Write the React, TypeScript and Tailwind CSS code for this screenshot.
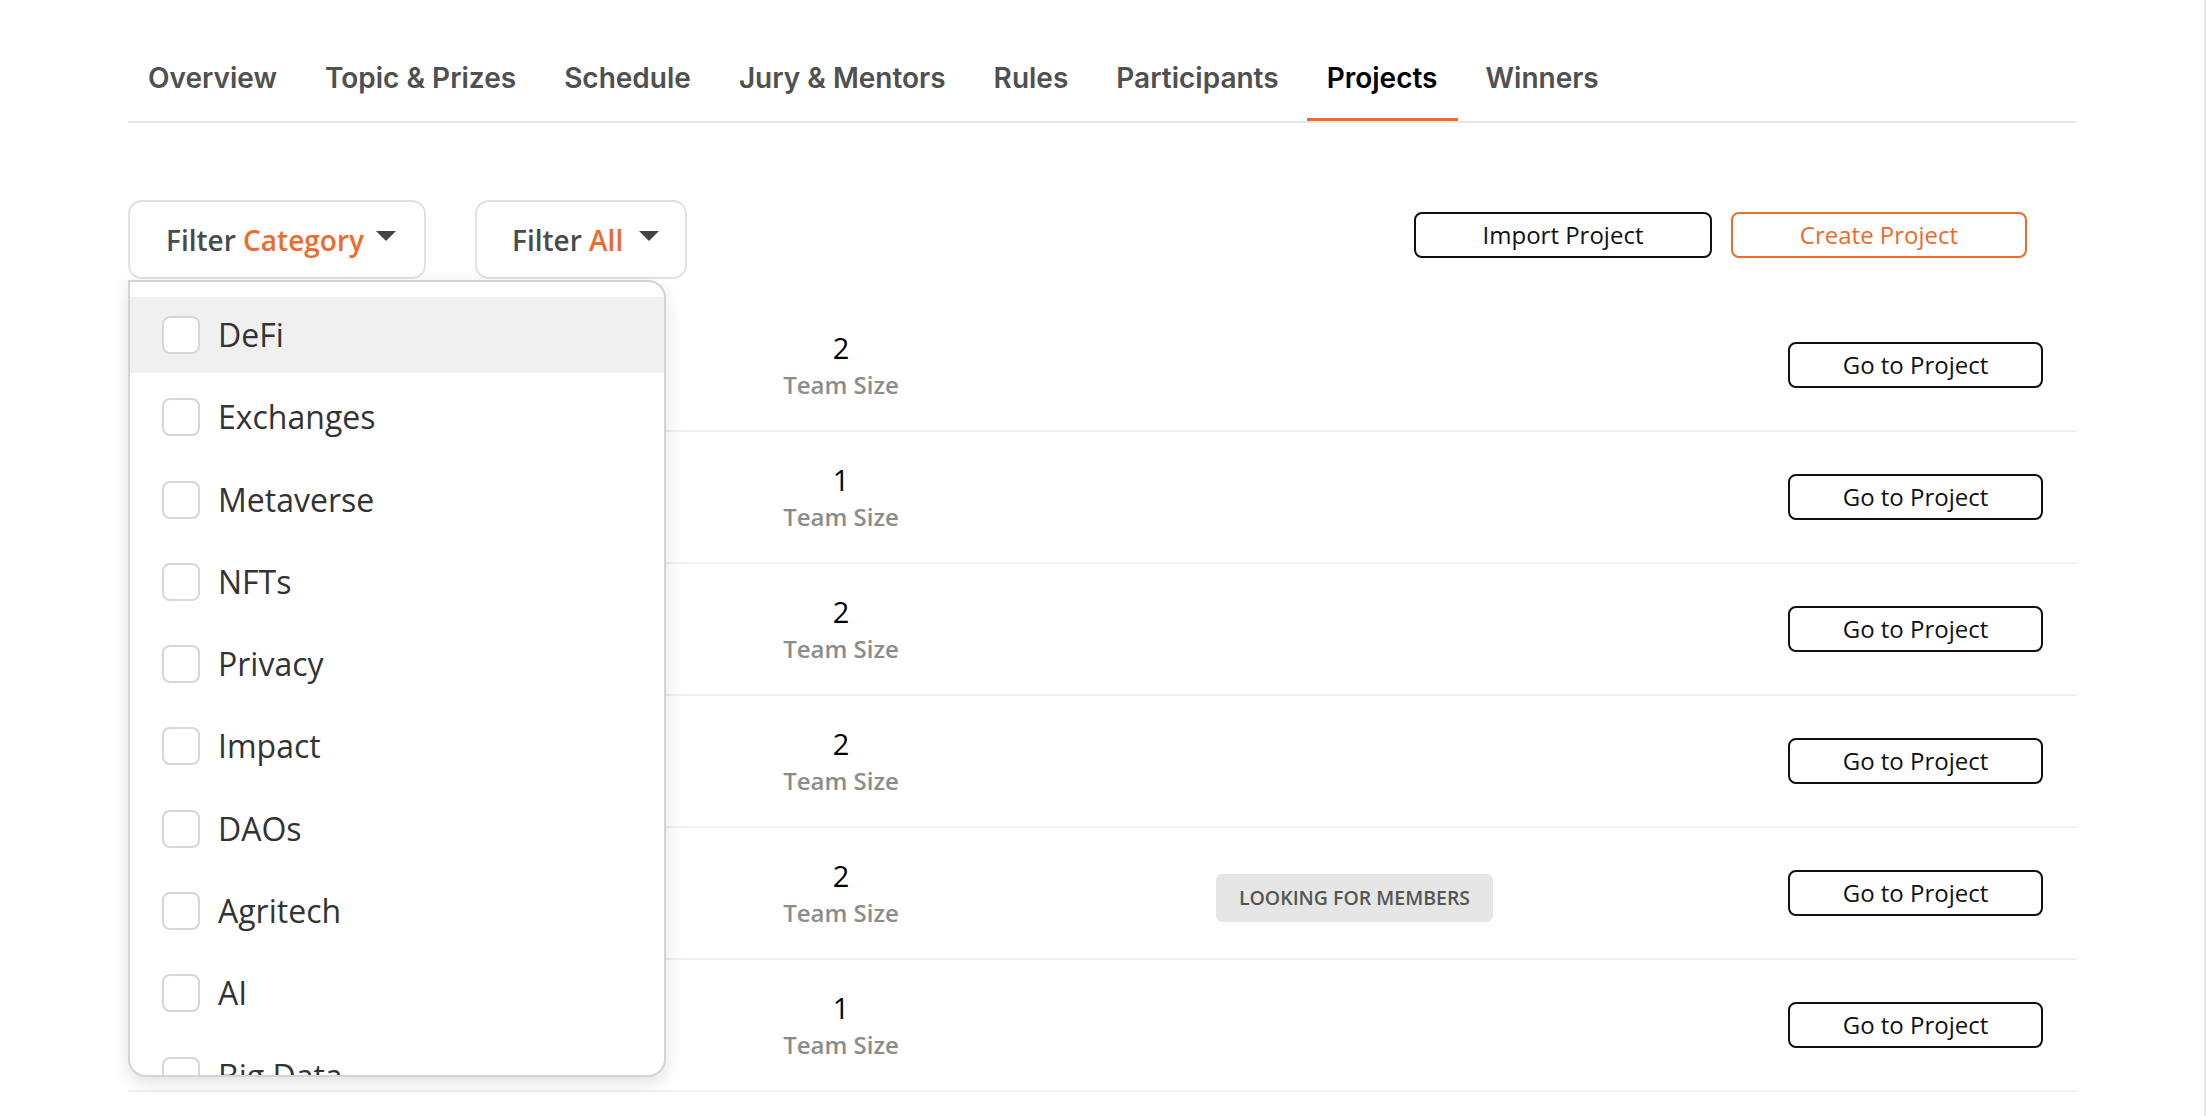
const tabs = ['Overview', 'Topic & Prizes', 'Schedule', 'Jury & Mentors', 'Rules', 'Participants', 'Projects', 'Winners']

const categories = ['DeFi', 'Exchanges', 'Metaverse', 'NFTs', 'Privacy', 'Impact', 'DAOs', 'Agritech', 'AI', 'Big Data', 'Gaming', 'Infrastructure']

const projects = [
  { id: 1, size: 2, looking: false },
  { id: 2, size: 1, looking: false },
  { id: 3, size: 2, looking: false },
  { id: 4, size: 2, looking: false },
  { id: 5, size: 2, looking: true },
  { id: 6, size: 1, looking: false },
]

const Caret = () => (
  <span className="mt-[11px] w-0 h-0 border-l-[10px] border-r-[10px] border-t-[10px] border-l-transparent border-r-transparent border-t-[#444]" />
)

const CategoryMenu = () => (
  <div className="absolute top-[80px] left-0 z-10 w-[538px] h-[797px] bg-white border-2 border-[#d4d4d4] rounded-[18px] rounded-tl-none overflow-hidden shadow-[0_6px_18px_rgba(0,0,0,0.12)]">
    <div className="pt-[15px] flex flex-col gap-[6.3px]">
      {categories.map((cat, i) => (
        <label
          key={cat}
          className={`flex items-center h-[76px] shrink-0 pl-[32px] gap-[18px] ${i === 0 ? 'bg-[#f0f0f0]' : ''}`}
        >
          <span className="w-[38px] h-[38px] shrink-0 rounded-[8px] border-2 border-[#d6d6d6] bg-white" />
          <span className="text-[32px] leading-[44px] text-[#333]">{cat}</span>
        </label>
      ))}
    </div>
  </div>
)

export default function App() {
  return (
    <div className="min-h-screen bg-white border-r-2 border-[#e8e8e8] font-['Open_Sans',sans-serif]">
      <div className="ml-[128px] w-[1948px]">
        {/* Tabs */}
        <nav className="flex gap-2 border-b-2 border-[#e6e6e6]">
          {tabs.map((tab) => (
            <button
              key={tab}
              className={`px-5 pt-[61px] pb-[23px] border-b-[3px] font-['Inter',sans-serif] font-semibold text-[28px] leading-[34px] ${
                tab === 'Projects' ? 'border-[#ec6b2d] text-black' : 'border-transparent text-[#505050]'
              }`}
            >
              {tab}
            </button>
          ))}
        </nav>

        {/* Toolbar */}
        <div className="mt-[77px] flex items-start">
          <div className="relative">
            <div className="w-[298px] h-[79px] border-2 border-[#e2e2e2] rounded-[14px] pl-[36px] pt-[18px] flex items-start gap-[12px]">
              <span className="text-[28px] leading-[40px] font-semibold text-[#4a4a4a]">
                Filter <span className="text-[#ec6b2d]">Category</span>
              </span>
              <Caret />
            </div>
            <CategoryMenu />
          </div>

          <div className="ml-[49px] w-[212px] h-[79px] border-2 border-[#e2e2e2] rounded-[14px] pl-[35px] pt-[18px] flex items-start gap-[16px]">
            <span className="text-[28px] leading-[40px] font-semibold text-[#4a4a4a]">
              Filter <span className="text-[#ec6b2d]">All</span>
            </span>
            <Caret />
          </div>

          <div className="ml-auto mr-[49px] mt-[12px] flex gap-[19px]">
            <button className="w-[298px] h-[46px] border-2 border-[#111] rounded-[8px] text-[24px] text-[#111]">
              Import Project
            </button>
            <button className="w-[296px] h-[46px] border-2 border-[#ec6b2d] rounded-[8px] text-[24px] text-[#ec6b2d]">
              Create Project
            </button>
          </div>
        </div>

        {/* Project rows */}
        <div className="mt-[21px]">
          {projects.map((p) => (
            <div key={p.id} className="flex items-center h-[132px] border-b-2 border-[#f0f0f0]">
              <div className="w-[633px]" />
              <div className="w-[160px] flex flex-col items-center">
                <span className="text-[29px] leading-[39px] text-black">{p.size}</span>
                <span className="text-[24px] leading-[35px] font-semibold text-[#8c8c8c]">Team Size</span>
              </div>
              <div className="w-[295px]" />
              <div className="flex-1 pt-[10px]">
                {p.looking && (
                  <span className="inline-flex items-center justify-center w-[277px] h-[48px] rounded-[6px] bg-[#e6e6e6] text-[19.5px] font-semibold text-[#555] uppercase">
                    Looking for members
                  </span>
                )}
              </div>
              <button className="w-[255px] h-[46px] mr-[33px] border-2 border-[#111] rounded-[8px] text-[24px] text-[#111]">
                Go to Project
              </button>
            </div>
          ))}
        </div>
      </div>
    </div>
  )
}
